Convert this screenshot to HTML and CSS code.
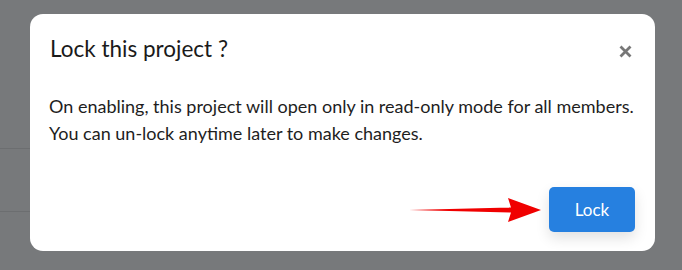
FILE: index.html
```html
<!DOCTYPE html>
<html>
<head>
<meta charset="utf-8">
<link rel="stylesheet" href="styles.css">
</head>
<body>
<div class="backdrop">
  <div class="bg-line line1"></div>
  <div class="bg-line line2"></div>
  <div class="modal">
    <div class="header">
      <h2 class="title">Lock this project ?</h2>
      <svg class="close" width="13" height="13" viewBox="0 0 13 13">
        <path d="M1.5 1.5 L11.5 11.5 M11.5 1.5 L1.5 11.5" stroke="#777" stroke-width="2.8" stroke-linecap="butt"/>
      </svg>
    </div>
    <div class="body">
      <p>On enabling, this project will open only in read-only mode for all members.</p>
      <p>You can un-lock anytime later to make changes.</p>
    </div>
    <div class="footer">
      <svg class="arrow" width="132" height="30" viewBox="0 0 132 30">
        <polygon points="0,15 102,12.5 99,3 132,15 99,27 102,17.5" fill="#f00000"/>
      </svg>
      <button class="btn">Lock</button>
    </div>
  </div>
</div>
</body>
</html>
```
FILE: styles.css
```css
html, body { margin: 0; padding: 0; }
body { font-family: "Lato", "Open Sans", sans-serif; }
.backdrop {
  width: 682px; height: 270px; background: #77797b;
  position: relative; overflow: hidden;
  padding: 14px 27px 0 30px; box-sizing: border-box;
}
.bg-line { position: absolute; left: 0; width: 30px; height: 1px; background: #6c6e70; }
.line1 { top: 148px; }
.line2 { top: 211px; }
.modal {
  background: #fff; border-radius: 13px; height: 237px; box-sizing: border-box;
  display: flex; flex-direction: column;
}
.header { display: flex; justify-content: space-between; align-items: center; padding: 20px 23px 0 20px; }
.title { margin: 0; font-weight: 400; font-size: 22.5px; color: #1a1a1a; line-height: 30px; }
.close { margin-top: 4px; }
.body { padding: 29px 19px 0 19px; font-size: 18px; color: #1e1e1e; }
.body p { margin: 0; line-height: 27px; white-space: nowrap; }
.footer { margin-top: auto; display: flex; justify-content: flex-end; align-items: center; padding: 0 20px 19px 0; }
.arrow { margin-right: 8px; }
.btn {
  width: 86px; height: 45px; border: none; border-radius: 5px; background: #2680e0; color: #fff;
  font-family: inherit; font-size: 17px; box-shadow: 0 6px 14px rgba(0,0,0,0.12);
}
```
